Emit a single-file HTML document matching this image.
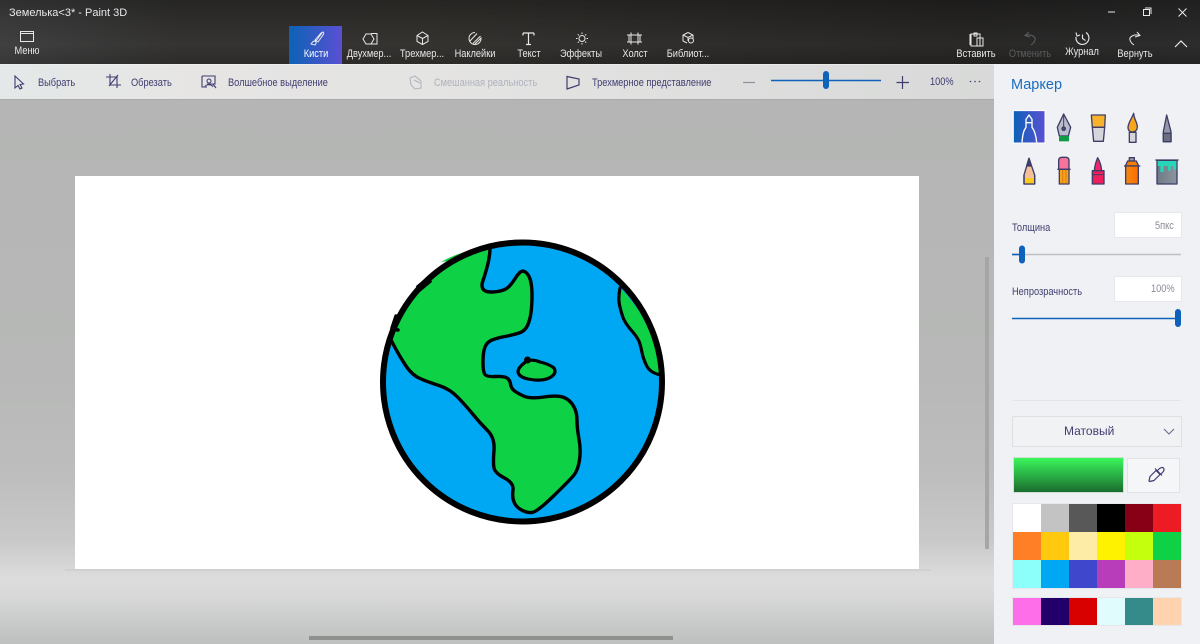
<!DOCTYPE html>
<html><head><meta charset="utf-8"><title>Paint 3D</title>
<style>
html,body{margin:0;padding:0;width:1200px;height:644px;overflow:hidden;background:#b6b7b6}
body{position:relative;font-family:"Liberation Sans",sans-serif;font-size:11px}
div{position:absolute}
.t{position:absolute;white-space:nowrap;line-height:14px;height:14px;transform:scaleX(.84);transform-origin:left center}
.c{transform:translateX(-50%) scaleX(.84);transform-origin:center center}
.w{color:#e8e8e8}
.d{color:#3f3d70}
</style></head><body>
<div style="left:0;top:0;width:1200px;height:64px;background:linear-gradient(90deg,#3a3a3a 0,#2e2d2c 15%,#2f2d2a 35%,#2a2826 55%,#232221 80%,#262626 100%)"></div>
<div style="left:0;top:0;width:1200px;height:64px;background:linear-gradient(180deg,rgba(0,0,0,.18),rgba(0,0,0,0) 35%,rgba(255,255,255,.03) 70%,rgba(0,0,0,.05))"></div>
<div style="left:0;top:100px;width:994px;height:544px;background:linear-gradient(180deg,#b4b5b4 0,#b7b8b7 50%,#bcbdbc 68%,#c8c9c8 81%,#dcdddc 88%,#d8d9d8 91%,#c6c8c7 97%,#bec0bf 100%)"></div>
<div style="left:0;top:64px;width:994px;height:36px;background:linear-gradient(90deg,#e4e8e8 0,#e6e5e4 20%,#e3e3e2 50%,#dcdddc 80%,#d8d9d8 100%);border-bottom:1px solid #a9aaa9;box-sizing:border-box"></div>
<div style="left:0;top:64px;width:994px;height:1px;background:#f2f2f2;opacity:.6"></div>
<div style="left:994px;top:64px;width:206px;height:580px;background:#f0f1f4"></div>
<div style="left:985px;top:257px;width:4px;height:292px;background:#a5a6a5"></div>
<div style="left:309px;top:636px;width:364px;height:4px;background:#8f918f"></div>
<div style="left:65px;top:569px;width:866px;height:2px;background:#cfd0cf"></div>
<div style="left:75px;top:176px;width:844px;height:393px;background:#fff"></div>
<div style="left:289px;top:26px;width:53px;height:38px;background:linear-gradient(90deg,#0c62b6,#5a50d2)"></div>

<svg style="position:absolute;left:0;top:0" width="1200" height="644" viewBox="0 0 1200 644">
<!-- Globe -->
<circle cx="522.5" cy="382" r="139.5" fill="#00a8f3"/>
<path d="M490 247Q490 256 487.5 265.500Q485 275 483 280.500Q481 286 483 289Q485 292 491 292Q497 292 502 290.500Q507 289 510 285.500Q513 282 515.500 278Q518 274 520.500 272Q523 270 526 272.500Q529 275 530.500 280.500Q532 286 532 295.500Q532 305 531 312.500Q530 320 527.500 325.500Q525 331 519 333Q513 335 505 336.500Q497 338 492 340Q487 342 485 347Q483 352 483 362Q483 372 485 374.500Q487 377 495.500 376.500Q504 376 507 378Q510 380 510.500 384Q511 388 514 390.500Q517 393 523.500 396Q530 399 544 397Q558 395 564 397.500Q570 400 573.500 406Q577 412 577 420Q577 428 579 439Q581 450 579.500 460Q578 470 574 475Q570 480 553.500 496Q537 512 532 512.500Q527 513 521.500 510Q516 507 514 502Q512 497 513 490Q514 483 504.500 478Q495 473 494 468Q493 463 494 450.500Q495 438 487.500 430.500Q480 423 473.500 415Q467 407 458.500 398Q450 389 439 385.500Q428 382 420 378.500Q412 375 406 366Q400 357 395.500 348.500L391 340A140 140 0 0 1 490 247Z" fill="#0ed145"/>
<path d="M441 262Q455 254 472 250L470 258Z" fill="#0ed145"/>
<path d="M620 288Q618 298 619.500 305Q621 312 623 317.500Q625 323 631.500 330.500Q638 338 639.500 342.500Q641 347 642 352.500Q643 358 646.500 365.500Q650 373 661 375A140 140 0 0 0 620 288Z" fill="#0ed145"/>
<path d="M490 247Q490 256 487.5 265.500Q485 275 483 280.500Q481 286 483 289Q485 292 491 292Q497 292 502 290.500Q507 289 510 285.500Q513 282 515.500 278Q518 274 520.500 272Q523 270 526 272.500Q529 275 530.500 280.500Q532 286 532 295.500Q532 305 531 312.500Q530 320 527.500 325.500Q525 331 519 333Q513 335 505 336.500Q497 338 492 340Q487 342 485 347Q483 352 483 362Q483 372 485 374.500Q487 377 495.500 376.500Q504 376 507 378Q510 380 510.500 384Q511 388 514 390.500Q517 393 523.500 396Q530 399 544 397Q558 395 564 397.500Q570 400 573.500 406Q577 412 577 420Q577 428 579 439Q581 450 579.500 460Q578 470 574 475Q570 480 553.500 496Q537 512 532 512.500Q527 513 521.500 510Q516 507 514 502Q512 497 513 490Q514 483 504.500 478Q495 473 494 468Q493 463 494 450.500Q495 438 487.500 430.500Q480 423 473.500 415Q467 407 458.500 398Q450 389 439 385.500Q428 382 420 378.500Q412 375 406 366Q400 357 395.500 348.500L391 340" fill="none" stroke="#000" stroke-width="3.4" stroke-linejoin="round" stroke-linecap="round"/>
<path d="M620 288Q618 298 619.500 305Q621 312 623 317.500Q625 323 631.500 330.500Q638 338 639.500 342.500Q641 347 642 352.500Q643 358 646.500 365.500Q650 373 661 375" fill="none" stroke="#000" stroke-width="3.2" stroke-linejoin="round" stroke-linecap="round"/>
<path d="M527 361Q518 367 518 372Q519 377 528 379Q543 382 551 377Q557 373 554 368Q549 364 540 362Q533 359 527 361Z" fill="#0ed145" stroke="#000" stroke-width="3.2" stroke-linejoin="round"/>
<circle cx="527.5" cy="360" r="3.5"/>
<circle cx="522.5" cy="382" r="139.5" fill="none" stroke="#000" stroke-width="6"/>
<path d="M396 316L392 328M392 329L398 330" stroke="#000" stroke-width="3.500" stroke-linecap="round"/>
<path d="M418 289L430 279" stroke="#000" stroke-width="7"/>

<!-- Title-bar icons -->
<g fill="none" stroke="#e8e8e8" stroke-width="1">
<path d="M20.5 31.5H33.5V41.5H20.5ZM20.5 33.5H33.5"/>
<path d="M322 33 L316 41 M323 32 C324 33 324 34 323 35 L318 42 L315 40 L321 33ZM314 41 C316 41 317 43 315 45 L311 44 C312 43 312 42 314 41Z"/>
<path d="M371 33.500H377V44H368M366 34H371L374 39L371 44H366L363 39Z"/>
<path d="M422.5 32L428 35.5V41.5L422.5 44.5L417 41.5V35.5ZM417 35.5L422.5 38.5L428 35.5M422.5 38.5V44.5"/>
<path d="M475 32.5A6 6 0 1 0 481 38.5V38L475 44M480.5 36L473 43.5M477 33.5L470 41" />
<path d="M523 33H534M528.5 33V44.5M526 44.5H531M523 33V35.5M534 33V35.5" stroke-width="1.2"/>
<circle cx="582" cy="38.5" r="3"/>
<path d="M582 32.5V34M582 43V44.5M576 38.5H577.5M586.500 38.5H588M577.800 34.300L578.900 35.400M585.100 41.600L586.200 42.700M577.800 42.700L578.900 41.600M585.100 35.400L586.200 34.300"/>
<path d="M629 35H640V42H629ZM631 32.500V44.500M638 32.500V44.500M627 35H642M627 42H642"/>
<path d="M688 32.500L693 35V39M688 32.500L683 35V41L687 43M683 35L688 37.500L693 35M688 37.500V41"/><circle cx="691" cy="40.500" r="2.500"/>
<path d="M971 34H980V46H971ZM974 33H977V36H974Z M977 38H983V46H977Z M970 34 V45"/>
<path d="M1108 12H1115"/>
<path d="M1143.500 9.500H1149.500V15.500H1143.500ZM1145 8H1151V14"/>
<path d="M1178.500 8.500L1186.500 16.500M1186.500 8.500L1178.500 16.500"/>
<path d="M1086 32.500 A6.500 6.500 0 1 1 1076 37 M1082.500 34.500V38.500L1085.500 40.500M1076 32.500 L1077 36 L1080 35" stroke-width="1.100"/>
<path d="M1133 32L1130 35.500L1135 37M1130.500 35.500C1136 33.500 1141 37 1140 40C1139.500 42 1137.500 44 1136 45" transform="matrix(-1 0 0 1 2270 0)"/>
<path d="M1175 47L1181 41L1187 47" stroke-width="1.200"/>
</g>
<path d="M1029 32L1025 35.500L1030 37M1025.500 35.500C1031 33.500 1036 37 1035 40C1034.500 42 1032.500 44 1031 45" fill="none" stroke="#5e5e5e"/>

<!-- Toolbar icons -->
<g fill="none" stroke="#3f3d70" stroke-width="1.100">
<path d="M15 76L15 88L18 85.500L20 89L22 88L20 84.500L23.500 84Z"/>
<path d="M106 77H117V88M110 74V85H121M118 75L109 86"/>
<path d="M202 76H215V84H207M202 76V87H207"/><circle cx="209" cy="81" r="2"/><path d="M205 87C205 84 212 84 213 87M213 84L216 88"/>
<path d="M567 76.500L579 79V85L567 89Z" stroke-width="1.200"/>
<path d="M896.500 82.500H909M902.500 76V89" stroke-width="1.200"/>
</g>
<path d="M410 78L415 76L421 81V88L415 89L411 85ZM414 80L420 83" fill="none" stroke="#b0b2bd"/>
<path d="M743 82.500H755" stroke="#8f91a0" stroke-width="1.200"/>
<path d="M771 80.500H881" stroke="#0f62b9" stroke-width="1.500"/>
<rect x="823" y="71" width="6" height="18" rx="3" fill="#0f62b9"/>
<g fill="#3f3d70"><circle cx="970.500" cy="81.500" r=".8"/><circle cx="975" cy="81.500" r=".8"/><circle cx="979.500" cy="81.500" r=".8"/></g>

<!-- Brush tiles -->
<defs><linearGradient id="tg" x1="0" x2="1"><stop offset="0" stop-color="#0c62b6"/><stop offset="1" stop-color="#5a50d2"/></linearGradient>
<linearGradient id="og" x1="0" x2="1"><stop offset="0" stop-color="#f58a10"/><stop offset="1" stop-color="#fa6b00"/></linearGradient>
<linearGradient id="bk" x1="0" x2="1"><stop offset="0" stop-color="#6f7a85"/><stop offset="1" stop-color="#8c959e"/></linearGradient></defs>
<g transform="translate(1000 100) scale(.33333)" stroke="#3d3d68" stroke-width="4" stroke-linejoin="round">
<rect x="40" y="32" width="95" height="97" fill="url(#tg)" stroke="#fff" stroke-width="3"/>
<path d="M66 127C68 105 70 92 78 82V58L87 45L96 58V82C104 92 108 105 110 127M78 68H96" fill="none" stroke="#fff" stroke-width="4"/>
<path d="M191 42L172 82L178 108H205L212 82Z" fill="#b9bccb"/><path d="M191 42V80" stroke-width="3"/><circle cx="191" cy="86" r="5" fill="#54557a"/>
<rect x="177" y="108" width="30" height="16" fill="#0f9a46" stroke="none"/>
<path d="M274 45H316L314 82H277Z" fill="#f7b32b"/><path d="M277 82H314L310 124H281Z" fill="#d4d5dd"/>
<path d="M401 40C396 55 383 70 384 84C385 92 390 96 397 96C406 96 412 90 412 80C412 68 402 58 401 40Z" fill="#f9a61f"/>
<path d="M388 97H408V127H388Z" fill="#d4d5dd"/>
<path d="M500 45L490 95V125H513V95Z" fill="#9397a6"/><path d="M490 100H513V125H490Z" fill="#6b7080"/>
<path d="M87 175L72 225V252H104V225Z" fill="#f3c09a"/><path d="M87 175L80 198H94Z" fill="#3d3d68"/><path d="M76 234H100V252H76Z" fill="#fbc81c" stroke="none"/><path d="M72 225V252H104V225"  fill="none"/>
<path d="M176 208V182Q176 172 186 172H197Q207 172 207 182V208Z" fill="#f6739b"/><path d="M172 208H212" /><path d="M178 208H207V252H178Z" fill="#f8a11d"/><path d="M188 210V250M198 210V250" stroke="#d97d10" stroke-width="3"/>
<path d="M293 173C288 185 284 198 283 212H305C304 198 300 185 293 173Z" fill="#f0266a"/><path d="M277 212H312V252H277Z" fill="#ef1f5d"/><path d="M277 224H312" stroke-width="3"/>
<path d="M388 173H403V183H388Z" fill="#9ca0ae"/><path d="M383 183H409L416 198H376Z" fill="#f47c08"/><path d="M372 198H421" /><path d="M377 198H415V252H377Z" fill="url(#og)"/>
<rect x="471" y="181" width="60" height="71" fill="url(#bk)"/><path d="M473 183H529V208H519V198H512V212H504V198H491V216H481V198H473Z" fill="#26d6b6" stroke="none"/><path d="M466 180H536" />
</g>

<!-- Sliders -->
<path d="M1012 254.500H1181" stroke="#bfc0c2" stroke-width="1.600"/>
<path d="M1012 254.500H1022" stroke="#0f62b9" stroke-width="1.600"/>
<rect x="1019" y="245.500" width="6" height="18" rx="3" fill="#0f62b9"/>
<path d="M1012 318.500H1178" stroke="#0f62b9" stroke-width="1.600"/>
<rect x="1175" y="309" width="6" height="18" rx="3" fill="#0f62b9"/>
</svg>

<span class="t" style="left:9px;top:6px;font-size:11px;transform:none;color:#e8e8e8">Земелька&lt;3* - Paint 3D</span>
<span class="t w c" style="left:26.500px;top:44px">Меню</span>
<span class="t w c" style="left:315.500px;top:47px;color:#fff">Кисти</span>
<span class="t w c" style="left:369px;top:47px">Двухмер...</span>
<span class="t w c" style="left:422px;top:47px">Трехмер...</span>
<span class="t w c" style="left:475px;top:47px">Наклейки</span>
<span class="t w c" style="left:528.500px;top:47px">Текст</span>
<span class="t w c" style="left:581px;top:47px">Эффекты</span>
<span class="t w c" style="left:634.500px;top:47px">Холст</span>
<span class="t w c" style="left:688px;top:47px">Библиот...</span>
<span class="t w c" style="left:976px;top:47px">Вставить</span>
<span class="t c" style="left:1029.500px;top:47px;color:#5c5c5c">Отменить</span>
<span class="t w c" style="left:1082px;top:44.500px">Журнал</span>
<span class="t w c" style="left:1135px;top:47px">Вернуть</span>

<span class="t d" style="left:38px;top:75.500px">Выбрать</span>
<span class="t d" style="left:131px;top:75.500px">Обрезать</span>
<span class="t d" style="left:228px;top:75.500px">Волшебное выделение</span>
<span class="t" style="left:434px;top:75.500px;color:#b0b2bd">Смешанная реальность</span>
<span class="t d" style="left:592px;top:75.500px">Трехмерное представление</span>
<span class="t d" style="left:930px;top:74.500px">100%</span>

<span class="t" style="left:1011px;top:77px;font-size:14.500px;height:17px;line-height:17px;color:#1a6cc0;transform:none">Маркер</span>
<span class="t d" style="left:1012px;top:221px">Толщина</span>
<span class="t d" style="left:1012px;top:285px">Непрозрачность</span>

<div style="left:1115px;top:213px;width:66px;height:24px;background:#fff;box-shadow:0 0 0 1px #e6e7ea"></div>
<span class="t" style="left:1155px;top:219px;color:#8b8c96">5пкс</span>
<div style="left:1115px;top:277px;width:66px;height:24px;background:#fff;box-shadow:0 0 0 1px #e6e7ea"></div>
<span class="t" style="left:1151px;top:282px;color:#8b8c96">100%</span>

<div style="left:1012px;top:400px;width:169px;height:1px;background:#e4e5e8"></div>
<div style="left:1012px;top:416px;width:170px;height:31px;box-sizing:border-box;border:1px solid #dfe0e4;background:#f1f2f4"></div>
<span class="t d" style="left:1064px;top:424px;font-size:12px;transform:none">Матовый</span>

<div style="left:1013px;top:457px;width:111px;height:36px;box-sizing:border-box;border:1px solid #cfe0d2;background:linear-gradient(180deg,#3af65c,#1a6c2e)"></div>
<div style="left:1127px;top:458px;width:53px;height:35px;box-sizing:border-box;border:1px solid #e2e3e7;background:#f5f6f8"></div>

<div style="left:1012px;top:503px;width:170px;height:86px;background:#e6e7ea"></div>
<div style="left:1012px;top:597px;width:170px;height:29px;background:#e6e7ea"></div>
<div style="left:1013px;top:504px;width:28px;height:28px;background:#fff"></div>
<div style="left:1041px;top:504px;width:28px;height:28px;background:#c3c3c3"></div>
<div style="left:1069px;top:504px;width:28px;height:28px;background:#585858"></div>
<div style="left:1097px;top:504px;width:28px;height:28px;background:#000"></div>
<div style="left:1125px;top:504px;width:28px;height:28px;background:#880015"></div>
<div style="left:1153px;top:504px;width:28px;height:28px;background:#ed1c24"></div>
<div style="left:1013px;top:532px;width:28px;height:28px;background:#ff7f27"></div>
<div style="left:1041px;top:532px;width:28px;height:28px;background:#ffc90e"></div>
<div style="left:1069px;top:532px;width:28px;height:28px;background:#fdeca6"></div>
<div style="left:1097px;top:532px;width:28px;height:28px;background:#fff200"></div>
<div style="left:1125px;top:532px;width:28px;height:28px;background:#c4ff0e"></div>
<div style="left:1153px;top:532px;width:28px;height:28px;background:#0ed145"></div>
<div style="left:1013px;top:560px;width:28px;height:28px;background:#8cfffb"></div>
<div style="left:1041px;top:560px;width:28px;height:28px;background:#00a8f3"></div>
<div style="left:1069px;top:560px;width:28px;height:28px;background:#3f48cc"></div>
<div style="left:1097px;top:560px;width:28px;height:28px;background:#b83dba"></div>
<div style="left:1125px;top:560px;width:28px;height:28px;background:#ffaec8"></div>
<div style="left:1153px;top:560px;width:28px;height:28px;background:#b97a56"></div>
<div style="left:1013px;top:598px;width:28px;height:27px;background:#ff6ee9"></div>
<div style="left:1041px;top:598px;width:28px;height:27px;background:#22006a"></div>
<div style="left:1069px;top:598px;width:28px;height:27px;background:#d90000"></div>
<div style="left:1097px;top:598px;width:28px;height:27px;background:#e0fcfc"></div>
<div style="left:1125px;top:598px;width:28px;height:27px;background:#358a8a"></div>
<div style="left:1153px;top:598px;width:28px;height:27px;background:#ffd3b0"></div>

<svg style="position:absolute;left:0;top:0" width="1200" height="644" viewBox="0 0 1200 644">
<path d="M1164 429L1169 434L1174 429" fill="none" stroke="#6b6c88" stroke-width="1.100"/>
<path d="M1149 481L1150 476.500L1156 470.500L1160 474.500L1154 480.500L1149.500 481.500ZM1155 468.500L1162 475.500M1157.500 470.500L1159 469C1160.500 467.500 1162.500 467 1163.500 468C1164.500 469 1164 471 1162.500 472.500L1161 474" fill="none" stroke="#3f3d70" stroke-width="1.200" stroke-linejoin="round"/>
</svg>
</body></html>
